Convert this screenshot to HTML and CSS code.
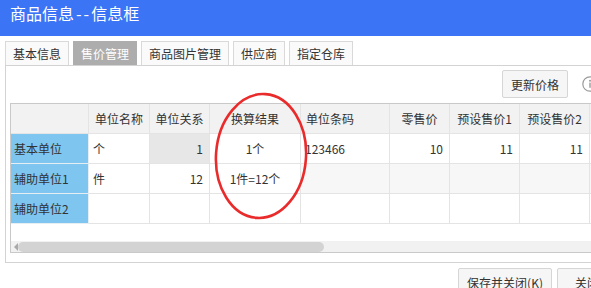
FILE: index.html
```html
<!DOCTYPE html>
<html lang="zh-CN">
<head>
    <meta charset="UTF-8">
    <title>商品信息--信息框</title>
    <link rel="stylesheet" href="styles.css">
</head>
<body>

    <div class="titlebar">商品信息<span class="dash">--</span>信息框</div>

    <div class="tabs">
        <div class="tab">基本信息</div>
        <div class="tab active">售价管理</div>
        <div class="tab">商品图片管理</div>
        <div class="tab">供应商</div>
        <div class="tab">指定仓库</div>
    </div>

    <div class="panel">
        <div class="toolbar">
            <button class="btn">更新价格</button>
            <span class="info-icon">
                <svg width="16" height="16" viewBox="0 0 16 16">
                    <circle cx="8" cy="8" r="7.2" fill="none" stroke="#9a9a9a" stroke-width="1.2"/>
                    <circle cx="8" cy="4.8" r="1" fill="#9a9a9a"/>
                    <rect x="7.3" y="6.6" width="1.4" height="5.2" fill="#9a9a9a"/>
                </svg>
            </span>
        </div>

        <div class="grid-wrap">
            <div class="grid">
                <div class="cell hd"></div>
                <div class="cell hd">单位名称</div>
                <div class="cell hd">单位关系</div>
                <div class="cell hd">换算结果</div>
                <div class="cell hd left">单位条码</div>
                <div class="cell hd">零售价</div>
                <div class="cell hd">预设售价1</div>
                <div class="cell hd">预设售价2</div>
                <div class="cell hd"></div>

                <div class="cell rowhd">基本单位</div>
                <div class="cell">个</div>
                <div class="cell num readonly">1</div>
                <div class="cell mid">1个</div>
                <div class="cell">123466</div>
                <div class="cell num">10</div>
                <div class="cell num">11</div>
                <div class="cell num">11</div>
                <div class="cell"></div>

                <div class="cell rowhd">辅助单位1</div>
                <div class="cell">件</div>
                <div class="cell num">12</div>
                <div class="cell mid">1件=12个</div>
                <div class="cell off"></div>
                <div class="cell off"></div>
                <div class="cell off"></div>
                <div class="cell off"></div>
                <div class="cell off"></div>

                <div class="cell rowhd">辅助单位2</div>
                <div class="cell"></div>
                <div class="cell"></div>
                <div class="cell"></div>
                <div class="cell"></div>
                <div class="cell"></div>
                <div class="cell"></div>
                <div class="cell"></div>
                <div class="cell"></div>
            </div>
            <div class="grid-space"></div>
            <div class="hscroll">
                <span class="arrow"></span>
                <span class="thumb"></span>
            </div>
        </div>
    </div>

    <div class="footer">
        <button class="btn">保存并关闭(<u>K</u>)</button>
        <button class="btn close">关闭</button>
    </div>

    <svg class="mark" width="591" height="288" viewBox="0 0 591 288">
        <ellipse cx="261" cy="156" rx="45" ry="62" transform="rotate(4 261 156)" fill="none" stroke="#ea2b2b" stroke-width="2.6"/>
    </svg>

</body>
</html>
```

FILE: styles.css
```css
body {
    margin: 0;
    width: 591px;
    height: 288px;
    overflow: hidden;
    background: #fff;
    font-family: "Noto Sans CJK SC", sans-serif;
    font-size: 12px;
    color: #333;
    position: relative;
}

.titlebar {
    height: 36px;
    box-sizing: border-box;
    padding: 3px 0 0 10px;
    background: #3c74f6;
    color: #fff;
    font-size: 16px;
    line-height: 20px;
}

.titlebar .dash {
    margin-left: 2px;
    letter-spacing: 2px;
}

.tabs {
    display: flex;
    gap: 4px;
    margin-top: 5px;
    padding-left: 5px;
}

.tab {
    height: 24px;
    box-sizing: border-box;
    padding: 0 7px;
    border: 1px solid #d9d9d9;
    border-bottom: none;
    background: #fafafa;
    line-height: 23px;
    color: #333;
    white-space: nowrap;
}

.tab.active {
    background: #adadad;
    border-color: #adadad;
    color: #fff;
}

.panel {
    margin-left: 5px;
    width: 598px;
    box-sizing: border-box;
    border: 1px solid #d3d3d3;
    padding: 4px 4px 9px;
}

.toolbar {
    display: flex;
    justify-content: flex-end;
    align-items: center;
    gap: 14px;
    height: 28px;
}

.btn {
    height: 28px;
    box-sizing: border-box;
    padding: 0 8px;
    border: 1px solid #d6d6d6;
    border-radius: 2px;
    background: #f6f6f6;
    font-family: "Noto Sans CJK SC", sans-serif;
    font-size: 12px;
    color: #333;
    white-space: nowrap;
}

.info-icon {
    display: flex;
    width: 16px;
    height: 16px;
}

.grid-wrap {
    margin-top: 5px;
    border: 1px solid #c9c9c9;
    overflow: hidden;
}

.grid {
    display: grid;
    grid-template-columns: 78px 61px 60px 91px 89px 60px 70px 70px 80px;
    grid-auto-rows: 30px;
    width: max-content;
}

.cell {
    display: flex;
    align-items: center;
    box-sizing: border-box;
    padding: 0 4px;
    border-right: 1px solid #e4e4e4;
    border-bottom: 1px solid #e4e4e4;
    background: #fff;
    white-space: nowrap;
    color: #333;
}

.cell.hd {
    justify-content: center;
    background: #f2f2f2;
}

.cell.hd.left {
    justify-content: flex-start;
    padding-left: 5px;
}

.cell.rowhd {
    background: #7ec6ef;
    padding-left: 3px;
    border-color: #e6eef3;
}

.cell.num {
    justify-content: flex-end;
    padding-right: 6px;
}

.cell.mid {
    justify-content: center;
}

.cell.readonly {
    background: #e7e7e7;
}

.cell.off {
    background: #f7f7f7;
}

.grid-space {
    height: 17px;
}

.hscroll {
    display: flex;
    align-items: center;
    height: 11px;
    padding-left: 3px;
    background: #f1f1f1;
}

.hscroll .arrow {
    width: 0;
    height: 0;
    border-top: 4px solid transparent;
    border-bottom: 4px solid transparent;
    border-right: 4px solid #a9a9a9;
}

.hscroll .thumb {
    width: 306px;
    height: 10px;
    border-radius: 5px;
    background: #d3d3d3;
}

.footer {
    display: flex;
    justify-content: flex-end;
    gap: 5px;
    width: 612px;
    margin: 5px 0 0 5px;
}

.footer .btn {
    padding: 0 8px;
}

.footer .close {
    padding: 0 17px;
}

.mark {
    position: absolute;
    left: 0;
    top: 0;
    pointer-events: none;
}
```
